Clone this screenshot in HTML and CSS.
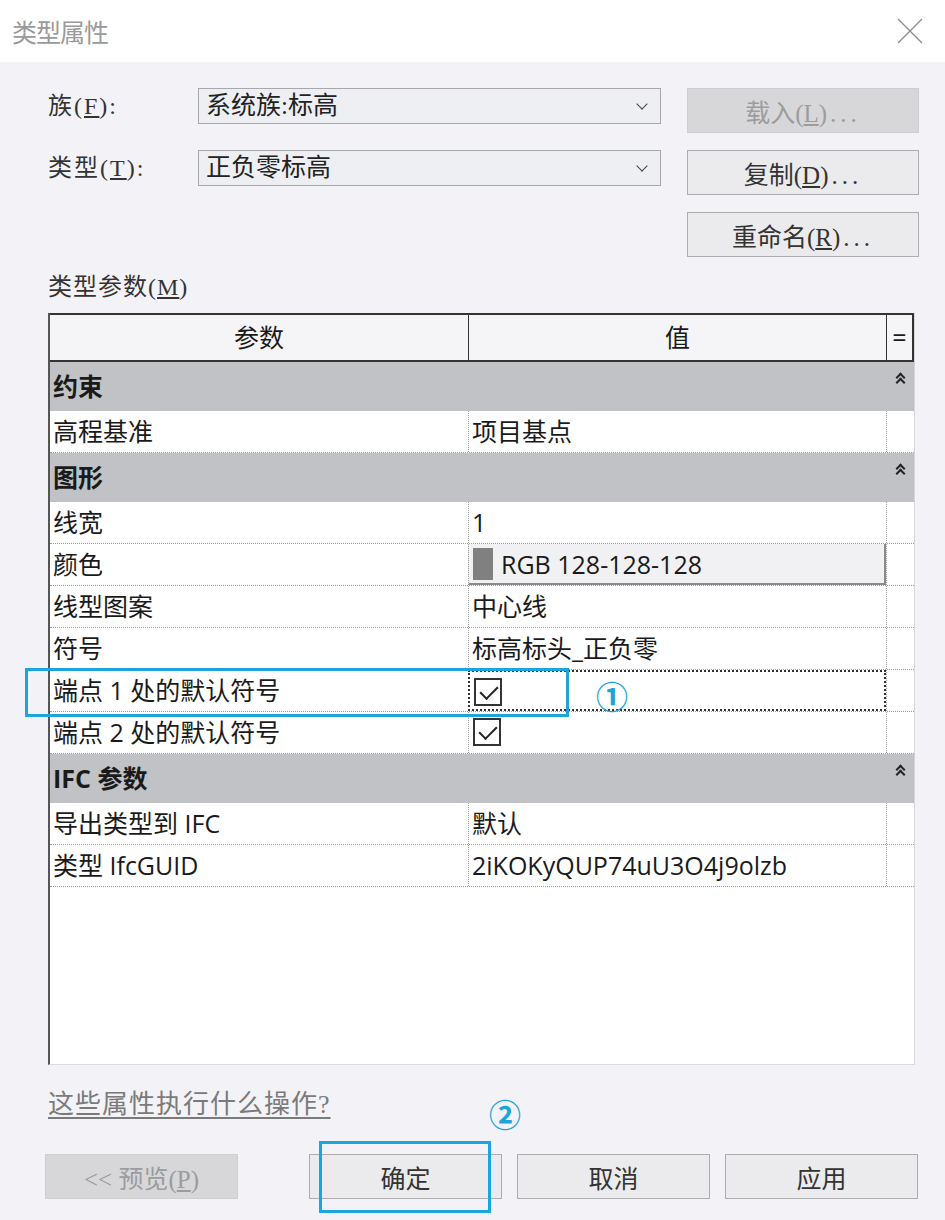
FILE: index.html
```html
<!DOCTYPE html>
<html lang="zh-CN">
<head>
    <meta charset="UTF-8">
    <title>类型属性</title>
    <link rel="stylesheet" href="styles.css">
</head>
<body>
    <div class="titlebar">
        <span class="title">类型属性</span>
        <svg class="close" width="26" height="26" viewBox="0 0 26 26">
            <path d="M1 1 L25 25 M25 1 L1 25" stroke="#8c8c8c" stroke-width="1.3" fill="none"/>
        </svg>
    </div>

    <div class="content">
        <div class="form-grid">
            <label class="lbl">族(<u>F</u>):</label>
            <div class="select">系统族:标高<span class="caret"></span></div>
            <button class="btn disabled">载入(<u>L</u>)<span class="dots">...</span></button>

            <label class="lbl">类型(<u>T</u>):</label>
            <div class="select">正负零标高<span class="caret"></span></div>
            <button class="btn">复制(<u>D</u>)<span class="dots">...</span></button>

            <span></span>
            <span></span>
            <button class="btn">重命名(<u>R</u>)<span class="dots">...</span></button>
        </div>

        <div class="section-label">类型参数(<u>M</u>)</div>

        <div class="props">
            <div class="row head">
                <div class="cell">参数</div>
                <div class="cell">值</div>
                <div class="cell">=</div>
            </div>

            <div class="row group">
                <div class="cell">约束</div>
                <div class="cell"></div>
                <div class="cell"><span class="fold"></span></div>
            </div>
            <div class="row">
                <div class="cell">高程基准</div>
                <div class="cell">项目基点</div>
                <div class="cell"></div>
            </div>

            <div class="row group">
                <div class="cell">图形</div>
                <div class="cell"></div>
                <div class="cell"><span class="fold"></span></div>
            </div>
            <div class="row">
                <div class="cell">线宽</div>
                <div class="cell">1</div>
                <div class="cell"></div>
            </div>
            <div class="row">
                <div class="cell">颜色</div>
                <div class="cell color-cell"><span class="swatch"></span>RGB 128-128-128</div>
                <div class="cell"></div>
            </div>
            <div class="row">
                <div class="cell">线型图案</div>
                <div class="cell">中心线</div>
                <div class="cell"></div>
            </div>
            <div class="row">
                <div class="cell">符号</div>
                <div class="cell">标高标头_正负零</div>
                <div class="cell"></div>
            </div>
            <div class="row">
                <div class="cell">端点 1 处的默认符号</div>
                <div class="cell selected"><span class="check"></span></div>
                <div class="cell"></div>
            </div>
            <div class="row">
                <div class="cell">端点 2 处的默认符号</div>
                <div class="cell"><span class="check"></span></div>
                <div class="cell"></div>
            </div>

            <div class="row group">
                <div class="cell">IFC 参数</div>
                <div class="cell"></div>
                <div class="cell"><span class="fold"></span></div>
            </div>
            <div class="row">
                <div class="cell">导出类型到 IFC</div>
                <div class="cell">默认</div>
                <div class="cell"></div>
            </div>
            <div class="row">
                <div class="cell">类型 IfcGUID</div>
                <div class="cell">2iKOKyQUP74uU3O4j9olzb</div>
                <div class="cell"></div>
            </div>
        </div>

        <a class="help" href="#">这些属性执行什么操作?</a>

        <div class="actions">
            <button class="btn disabled preview">&lt;&lt; 预览(<u>P</u>)</button>
            <button class="btn">确定</button>
            <button class="btn">取消</button>
            <button class="btn">应用</button>
        </div>
    </div>

    <!-- 标注 -->
    <div class="mark mark-1"></div>
    <span class="num num-1">①</span>
    <div class="mark mark-2"></div>
    <span class="num num-2">②</span>
</body>
</html>
```

FILE: styles.css
```css
* {
    box-sizing: border-box;
}
body {
    margin: 0;
    width: 945px;
    height: 1220px;
    background-color: #f3f3f7;
    font-family: "Liberation Serif", "Noto Sans CJK SC", serif;
    color: #333;
    position: relative;
    overflow: hidden;
}
.titlebar {
    height: 62px;
    background: #fff;
    display: flex;
    align-items: center;
    justify-content: space-between;
    padding: 0 22px 0 12px;
}
.title {
    font-family: "Noto Sans CJK SC", sans-serif;
    font-size: 25px;
    color: #9a9a9a;
    letter-spacing: -1px;
}
.content {
    padding: 26px 26px 0 48px;
}
.form-grid {
    display: grid;
    grid-template-columns: 124px 463px 232px;
    column-gap: 26px;
    row-gap: 17px;
    align-items: start;
}
.lbl {
    font-size: 24px;
    line-height: 36px;
    color: #333;
    letter-spacing: 2px;
}
.select {
    height: 36px;
    border: 1px solid #a8a8ac;
    background: #eeeff2;
    padding-left: 7px;
    font-size: 25px;
    line-height: 33px;
    color: #222;
    position: relative;
}
.caret {
    position: absolute;
    right: 14px;
    top: 11px;
    width: 8px;
    height: 8px;
    border-right: 1.5px solid #444;
    border-bottom: 1.5px solid #444;
    transform: rotate(45deg);
}
.btn {
    height: 45px;
    border: 1px solid #adadb0;
    background: #ebebee;
    font-family: "Liberation Serif", "Noto Sans CJK SC", serif;
    font-size: 25px;
    color: #333;
    padding: 0;
}
.dots {
    letter-spacing: 4px;
    margin-left: 3px;
}
.btn.disabled {
    background: #d7d7da;
    border-color: #cfcfd2;
    color: #9c9c9c;
}
.section-label {
    margin-top: 16px;
    font-size: 24px;
    line-height: 28px;
    color: #333;
    letter-spacing: 1px;
}
.props {
    margin-top: 12px;
    width: 867px;
    height: 752px;
    background: #fff;
    border-left: 2px solid #555;
    border-right: 1px solid #d6d6d9;
    border-bottom: 1px solid #dcdcdf;
    font-family: "Open Sans", "Noto Sans CJK SC", sans-serif;
    font-size: 25px;
    color: #1a1a1a;
}
.row {
    display: grid;
    grid-template-columns: 418px 418px 1fr;
    height: 42px;
    border-bottom: 1px dotted #9a9a9a;
}
.cell {
    padding-left: 3px;
    line-height: 40px;
    white-space: nowrap;
    position: relative;
}
.row .cell + .cell {
    border-left: 1px dotted #9a9a9a;
}
.row.head {
    height: 49px;
    background: #f5f5f8;
    border-top: 2px solid #333;
    border-bottom: 2px solid #333;
    border-right: 2px solid #333;
}
.row.head .cell {
    text-align: center;
    line-height: 44px;
    padding: 0;
}
.row.head .cell + .cell {
    border-left: 1px solid #333;
}
.row.group {
    height: 49px;
    background: #c1c2c5;
    border-bottom: none;
}
.row.group .cell {
    font-weight: bold;
    line-height: 48px;
}
.row.group .cell + .cell {
    border-left: none;
}
.fold {
    position: absolute;
    left: 10px;
    top: 11px;
    width: 8px;
    height: 12px;
}
.fold::before,
.fold::after {
    content: "";
    position: absolute;
    left: 1px;
    width: 5px;
    height: 5px;
    border-left: 2px solid #222;
    border-top: 2px solid #222;
    transform: rotate(45deg);
}
.fold::before {
    top: 1px;
}
.fold::after {
    top: 6px;
}
.color-cell {
    background: #f1f1f3;
    border-right: 2px solid #8a8a8d;
    border-bottom: 2px solid #8a8a8d;
    padding-left: 4px;
    display: flex;
    align-items: center;
    gap: 8px;
    line-height: 36px;
}
.swatch {
    width: 20px;
    height: 32px;
    background: #808080;
}
.selected {
    border: 2px dotted #333;
}
.row .cell.selected {
    border-left: 2px dotted #333;
}
.check {
    position: absolute;
    left: 4px;
    top: 6px;
    width: 28px;
    height: 28px;
    border: 2px solid #333;
    background: #fff;
}
.check::after {
    content: "";
    position: absolute;
    left: 8px;
    top: 2px;
    width: 8px;
    height: 15px;
    border-right: 2px solid #222;
    border-bottom: 2px solid #222;
    transform: rotate(45deg);
}
.help {
    display: inline-block;
    margin-top: 25px;
    font-size: 26px;
    line-height: 30px;
    color: #7a7a7a;
    text-decoration: underline;
    text-underline-offset: 4px;
    letter-spacing: 1px;
}
.actions {
    display: flex;
    gap: 15px;
    margin-top: 34px;
    margin-left: -3px;
    width: 874px;
}
.actions .btn {
    width: 193px;
}
.actions .preview {
    margin-right: 56px;
}
.mark {
    position: absolute;
    border: 3px solid #1ba5dc;
}
.mark-1 {
    left: 25px;
    top: 668px;
    width: 544px;
    height: 49px;
}
.mark-2 {
    left: 319px;
    top: 1141px;
    width: 172px;
    height: 72px;
}
.num {
    position: absolute;
    font-family: "Noto Sans CJK SC", sans-serif;
    font-weight: bold;
    font-size: 32px;
    line-height: 32px;
    color: #1ba5dc;
}
.num-1 {
    left: 596px;
    top: 679px;
}
.num-2 {
    left: 489px;
    top: 1097px;
}
```
